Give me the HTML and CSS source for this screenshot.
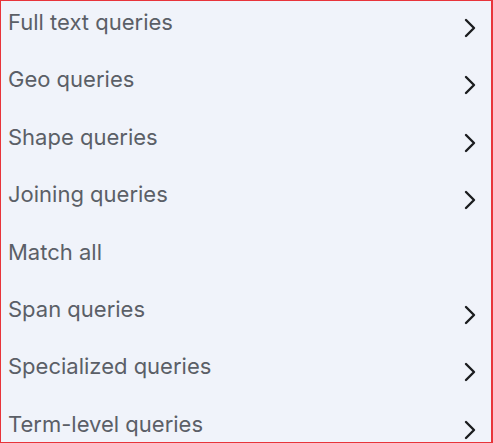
FILE: index.html
```html
<!DOCTYPE html>
<html>
<head>
<meta charset="utf-8">
<link rel="stylesheet" href="styles.css">
</head>
<body>
<div class="panel">
  <ul class="menu">
    <li class="row"><span class="label">Full text queries</span><svg class="chev" viewBox="0 0 12 20"><path d="M2 2 L10 10 L2 18"/></svg></li>
    <li class="row"><span class="label">Geo queries</span><svg class="chev" viewBox="0 0 12 20"><path d="M2 2 L10 10 L2 18"/></svg></li>
    <li class="row"><span class="label">Shape queries</span><svg class="chev" viewBox="0 0 12 20"><path d="M2 2 L10 10 L2 18"/></svg></li>
    <li class="row"><span class="label">Joining queries</span><svg class="chev" viewBox="0 0 12 20"><path d="M2 2 L10 10 L2 18"/></svg></li>
    <li class="row"><span class="label">Match all</span></li>
    <li class="row"><span class="label">Span queries</span><svg class="chev" viewBox="0 0 12 20"><path d="M2 2 L10 10 L2 18"/></svg></li>
    <li class="row"><span class="label">Specialized queries</span><svg class="chev" viewBox="0 0 12 20"><path d="M2 2 L10 10 L2 18"/></svg></li>
    <li class="row"><span class="label">Term-level queries</span><svg class="chev" viewBox="0 0 12 20"><path d="M2 2 L10 10 L2 18"/></svg></li>
  </ul>
</div>
</body>
</html>
```
FILE: styles.css
```css
html, body {
  margin: 0;
  padding: 0;
  background: #f0f3fa;
}
.panel {
  box-sizing: border-box;
  width: 493px;
  height: 443px;
  border: 1px solid #e8343a;
  border-right-width: 2px;
  background: #f0f3fa;
  overflow: hidden;
}
.menu {
  list-style: none;
  margin: 0;
  padding: 0;
}
.row {
  display: flex;
  justify-content: space-between;
  align-items: flex-start;
  height: 57.4px;
  box-sizing: border-box;
  padding: 7px 15px 0 7px;
}
.label {
  font-family: Inter, "Noto Sans", sans-serif;
  font-size: 22px;
  line-height: 28px;
  color: #5b5f67;
}
.chev {
  width: 12px;
  height: 20px;
  margin-top: 10px;
  fill: none;
  stroke: #1b1c1f;
  stroke-width: 2.4;
  stroke-linecap: round;
  stroke-linejoin: round;
}
```
